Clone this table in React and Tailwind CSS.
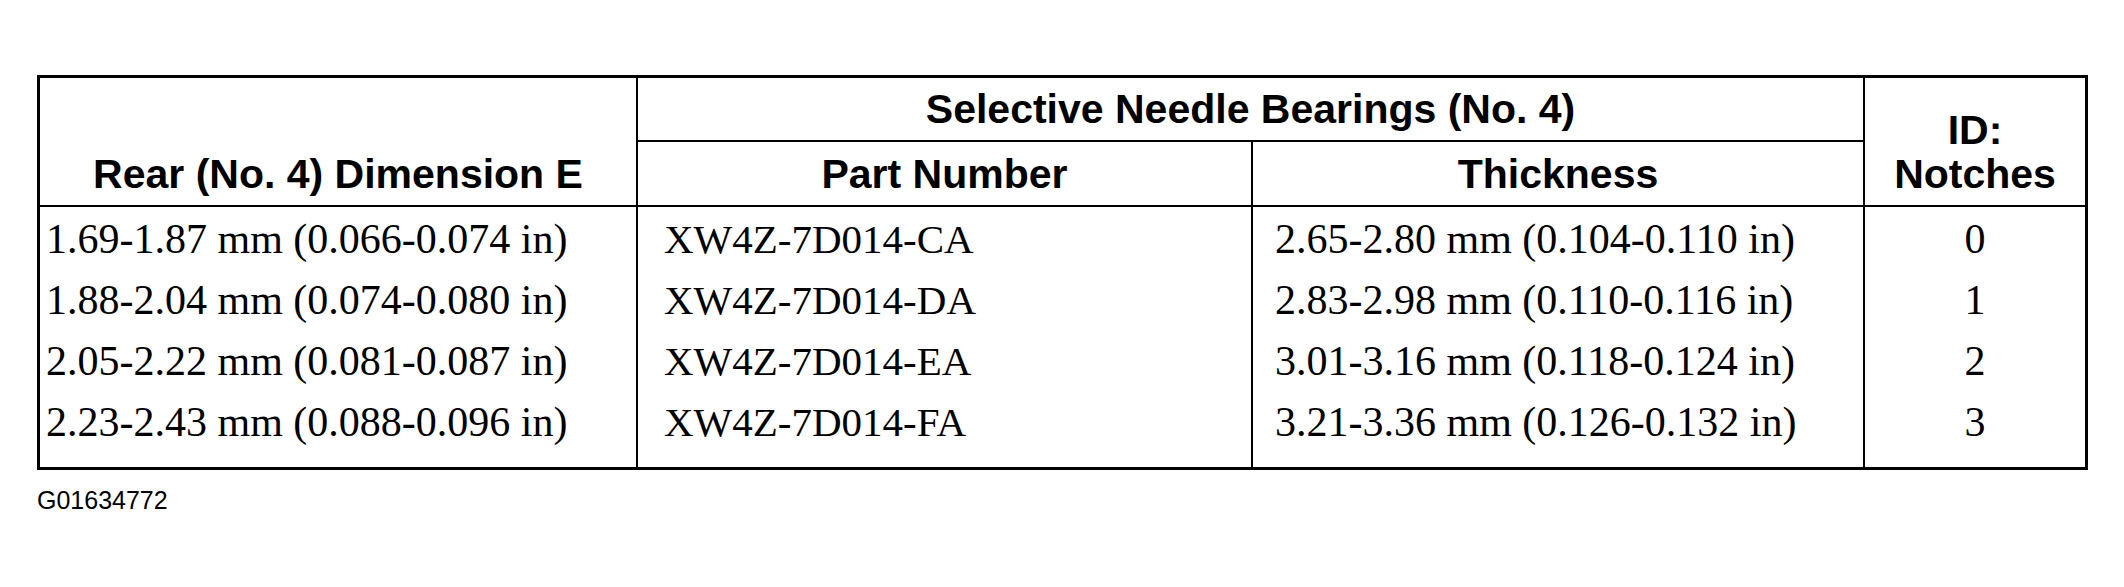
import React from "react";

const rows = [
  ["1.69-1.87 mm (0.066-0.074 in)", "XW4Z-7D014-CA", "2.65-2.80 mm (0.104-0.110 in)", "0"],
  ["1.88-2.04 mm (0.074-0.080 in)", "XW4Z-7D014-DA", "2.83-2.98 mm (0.110-0.116 in)", "1"],
  ["2.05-2.22 mm (0.081-0.087 in)", "XW4Z-7D014-EA", "3.01-3.16 mm (0.118-0.124 in)", "2"],
  ["2.23-2.43 mm (0.088-0.096 in)", "XW4Z-7D014-FA", "3.21-3.36 mm (0.126-0.132 in)", "3"],
];

export default function App() {
  return (
    <div className="w-[2124px] h-[587px] bg-white pt-[75px] pl-[37px] text-black">
      <div className="w-[2051px] border-[3px] border-black">
        <table className="w-full table-fixed border-collapse">
          <colgroup>
            <col className="w-[597px]" />
            <col className="w-[615px]" />
            <col className="w-[612px]" />
            <col />
          </colgroup>
          <thead className="font-['Liberation_Sans',Arial,sans-serif] font-bold text-[41px]">
            <tr className="h-[63px]">
              <th rowSpan={2} className="align-bottom pb-[13px] leading-[36px] font-bold">
                Rear (No. 4) Dimension E
              </th>
              <th colSpan={2} className="border-l-2 border-b-2 border-black leading-[40px] font-bold">
                Selective Needle Bearings (No. 4)
              </th>
              <th rowSpan={2} className="border-l-2 border-black align-bottom pb-[9px] leading-[44px] font-bold">
                ID:
                <br />
                Notches
              </th>
            </tr>
            <tr className="h-[65px]">
              <th className="border-l-2 border-black leading-[40px] font-bold">Part Number</th>
              <th className="border-l-2 border-black leading-[40px] font-bold">Thickness</th>
            </tr>
          </thead>
          <tbody className="font-['Liberation_Serif','Times_New_Roman',serif] text-[42px] leading-[61px]">
            {rows.map((r, i) => {
              const first = i === 0;
              const last = i === rows.length - 1;
              const pad = first ? "pt-[2px] border-t-2 border-black" : last ? "pb-[14px]" : "";
              return (
                <tr key={r[1]}>
                  <td className={`pl-[6px] whitespace-nowrap ${pad}`}>{r[0]}</td>
                  <td className={`pl-[26px] text-[41px] border-l-2 border-black whitespace-nowrap ${pad}`}>{r[1]}</td>
                  <td className={`pl-[22px] border-l-2 border-black whitespace-nowrap ${pad}`}>{r[2]}</td>
                  <td className={`text-center border-l-2 border-black ${pad}`}>{r[3]}</td>
                </tr>
              );
            })}
          </tbody>
        </table>
      </div>
      <div className="mt-[18px] font-['Liberation_Sans',Arial,sans-serif] text-[25px] leading-[25px]">
        G01634772
      </div>
    </div>
  );
}
